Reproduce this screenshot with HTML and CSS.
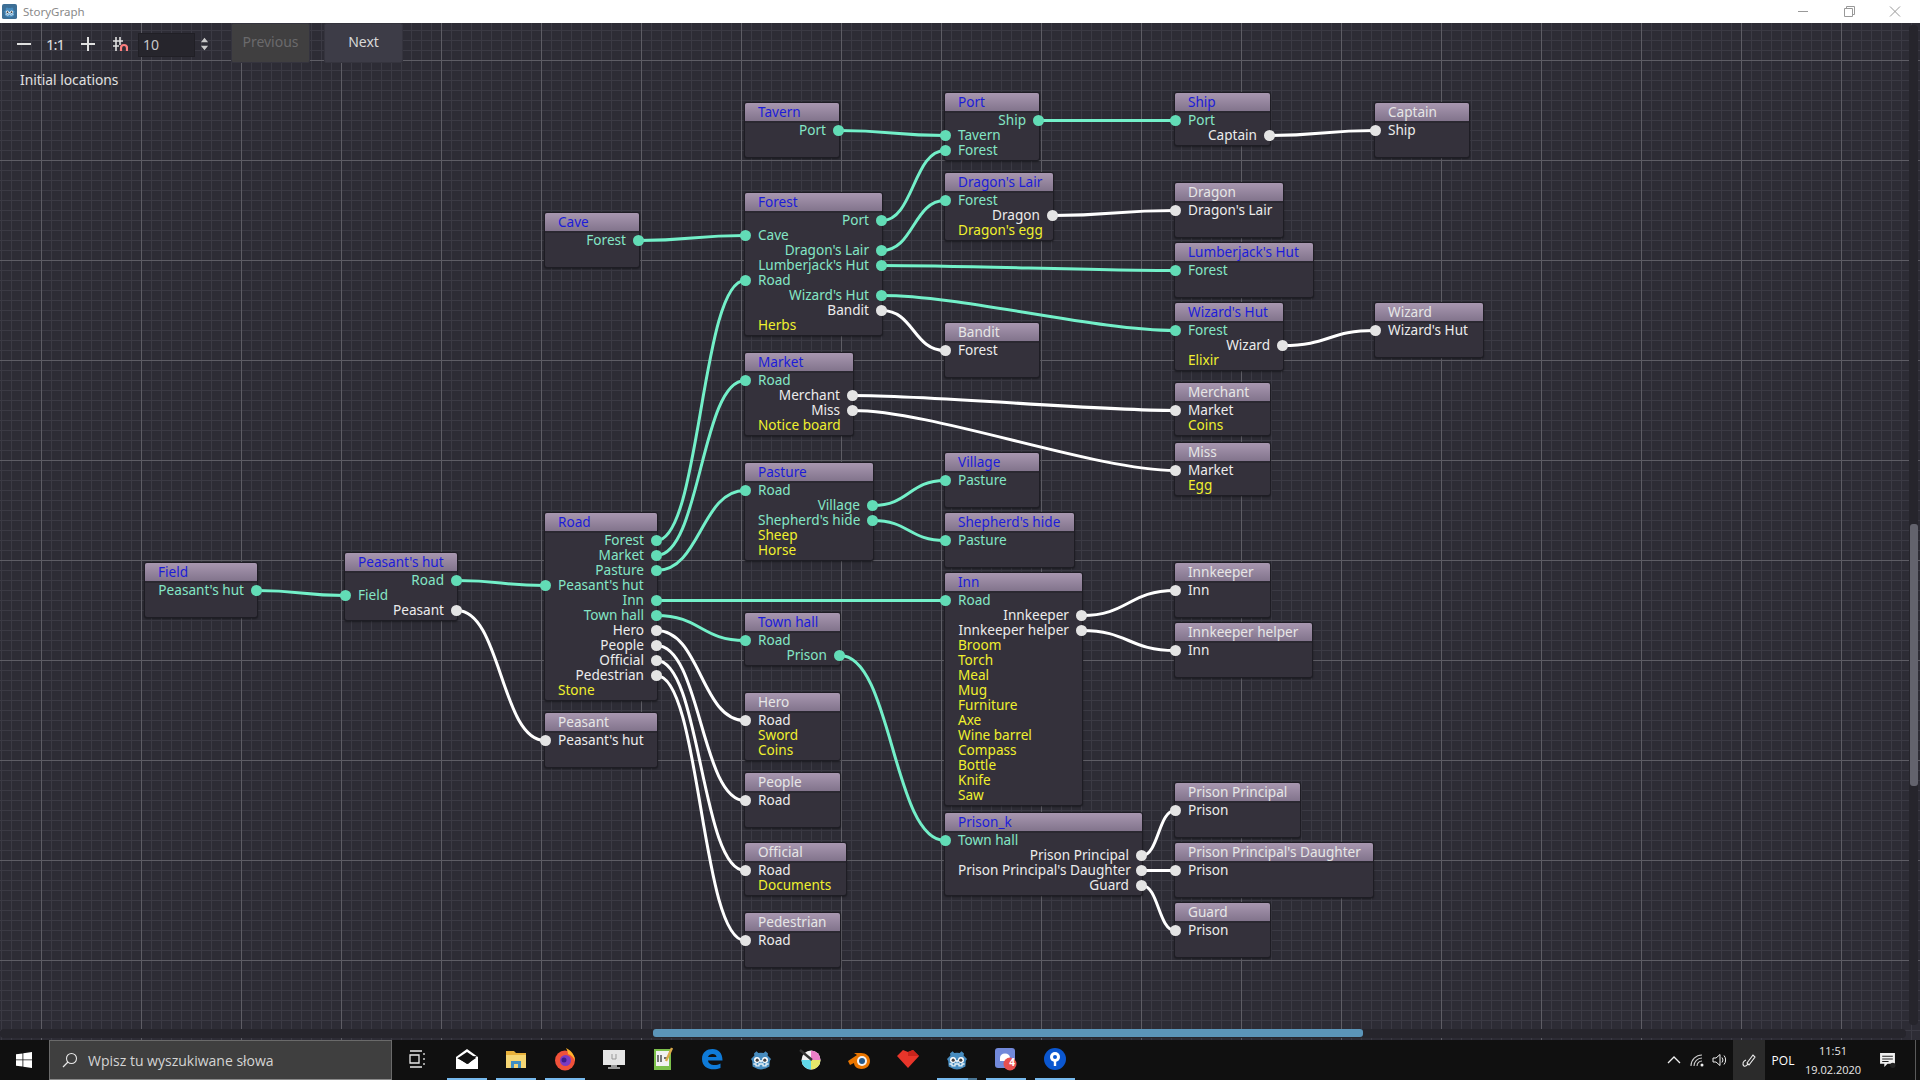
FILE: index.html
```html
<!DOCTYPE html>
<html lang="pl">
<head>
    <meta charset="UTF-8">
    <title>StoryGraph</title>
    <link rel="stylesheet" href="styles.css">
</head>
<body>
    <svg class="defs" width="0" height="0">
        <symbol id="godot" viewBox="0 0 24 24">
            <path fill="#478cbf" d="M5 6.5 L7.5 4.2 L9.3 6 Q12 5.4 14.7 6 L16.5 4.2 L19 6.5 L18.6 8.6 L22 12 L20.8 14 L20.4 19.6 Q16 22.4 12 22.4 Q8 22.4 3.6 19.6 L3.2 14 L2 12 L5.4 8.6 Z"/>
            <circle cx="8" cy="13" r="3" fill="#fff"/>
            <circle cx="16" cy="13" r="3" fill="#fff"/>
            <circle cx="8.2" cy="13.2" r="1.6" fill="#414042"/>
            <circle cx="15.8" cy="13.2" r="1.6" fill="#414042"/>
            <rect x="11.2" y="13" width="1.6" height="2.4" fill="#fff"/>
            <path fill="none" stroke="#e8f2f8" stroke-width="1.3" d="M4.4 17 H7 V18.8 H10 V17 H14 V18.8 H17 V17 H19.6"/>
        </symbol>
    </svg>

    <header class="titlebar">
        <svg class="app-icon" viewBox="0 0 16 16"><rect width="16" height="16" rx="2" fill="#3d6f96"/><use href="#godot" x="1" y="1" width="14" height="14"/></svg>
        <span class="app-name">StoryGraph</span>
        <div class="win-buttons">
            <svg viewBox="0 0 46 23"><path d="M18 11.5 H28" stroke="#999" fill="none"/></svg>
            <svg viewBox="0 0 46 23"><path d="M18.5 8.5 H26.5 V16.5 H18.5 Z M20.5 8.5 V6.5 H28.5 V14.5 H26.5" stroke="#999" fill="none"/></svg>
            <svg viewBox="0 0 46 23"><path d="M18 6.5 L28 16.5 M28 6.5 L18 16.5" stroke="#999" fill="none"/></svg>
        </div>
    </header>

    <main class="graph">
        <!-- wires use window coordinates, so the viewBox starts under the title bar -->
        <svg class="wires" viewBox="0 23 1920 1017">
            <g class="wire-teal">
                <path d="M257 590.5 C301 590.5 301 595.5 345 595.5"/>
                <path d="M457 580.5 C501 580.5 501 585.5 545 585.5"/>
                <path d="M656.5 540.5 C700.5 540.5 701 280.5 745 280.5"/>
                <path d="M656.5 555.5 C700.5 555.5 701 380.5 745 380.5"/>
                <path d="M656.5 570.5 C700.5 570.5 701 490.5 745 490.5"/>
                <path d="M656.5 600.5 H945"/>
                <path d="M656.5 615.5 C700.5 615.5 701 640.5 745 640.5"/>
                <path d="M639 240.5 C692 240.5 692 235.5 745 235.5"/>
                <path d="M839 130.5 C892 130.5 892 135.5 945 135.5"/>
                <path d="M882 220.5 C913.5 220.5 913.5 150.5 945 150.5"/>
                <path d="M882 250.5 C913.5 250.5 913.5 200.5 945 200.5"/>
                <path d="M882 265.5 C962 265.5 1095 270.5 1175 270.5"/>
                <path d="M882 295.5 C962 295.5 1095 330.5 1175 330.5"/>
                <path d="M873 505.5 C909 505.5 909 480.5 945 480.5"/>
                <path d="M873 520.5 C909 520.5 909 540.5 945 540.5"/>
                <path d="M840 655.5 C892 655.5 893 840.5 945 840.5"/>
                <path d="M1039 120.5 H1175"/>
            </g>
            <g class="wire-white">
                <path d="M457 610.5 C501 610.5 501 740.5 545 740.5"/>
                <path d="M656.5 630.5 C700.5 630.5 701 720.5 745 720.5"/>
                <path d="M656.5 645.5 C700.5 645.5 701 800.5 745 800.5"/>
                <path d="M656.5 660.5 C700.5 660.5 701 870.5 745 870.5"/>
                <path d="M656.5 675.5 C700.5 675.5 701 940.5 745 940.5"/>
                <path d="M882 310.5 C913.5 310.5 913.5 350.5 945 350.5"/>
                <path d="M853 395.5 C933 395.5 1095 410.5 1175 410.5"/>
                <path d="M853 410.5 C933 410.5 1095 470.5 1175 470.5"/>
                <path d="M1053 215.5 C1114 215.5 1114 210.5 1175 210.5"/>
                <path d="M1082 615.5 C1128 615.5 1129 590.5 1175 590.5"/>
                <path d="M1082 630.5 C1128 630.5 1129 650.5 1175 650.5"/>
                <path d="M1142 855.5 C1158.5 855.5 1158.5 810.5 1175 810.5"/>
                <path d="M1142 870.5 H1175"/>
                <path d="M1142 885.5 C1158.5 885.5 1158.5 930.5 1175 930.5"/>
                <path d="M1270 135.5 C1322 135.5 1323 130.5 1375 130.5"/>
                <path d="M1283 345.5 C1329 345.5 1329 330.5 1375 330.5"/>
            </g>
        </svg>

        <div class="node n-field">
            <div class="node-title loc">Field</div>
            <div class="row out teal">Peasant's hut<i class="slot"></i></div>
            <div class="row empty"></div>
        </div>
        <div class="node n-peasants-hut">
            <div class="node-title loc">Peasant's hut</div>
            <div class="row out teal">Road<i class="slot"></i></div>
            <div class="row in teal">Field<i class="slot"></i></div>
            <div class="row out white">Peasant<i class="slot"></i></div>
        </div>
        <div class="node n-road">
            <div class="node-title loc">Road</div>
            <div class="row out teal">Forest<i class="slot"></i></div>
            <div class="row out teal">Market<i class="slot"></i></div>
            <div class="row out teal">Pasture<i class="slot"></i></div>
            <div class="row in teal">Peasant's hut<i class="slot"></i></div>
            <div class="row out teal">Inn<i class="slot"></i></div>
            <div class="row out teal">Town hall<i class="slot"></i></div>
            <div class="row out white">Hero<i class="slot"></i></div>
            <div class="row out white">People<i class="slot"></i></div>
            <div class="row out white">Official<i class="slot"></i></div>
            <div class="row out white">Pedestrian<i class="slot"></i></div>
            <div class="row item">Stone</div>
        </div>
        <div class="node n-peasant">
            <div class="node-title">Peasant</div>
            <div class="row in white">Peasant's hut<i class="slot"></i></div>
            <div class="row empty"></div>
        </div>
        <div class="node n-cave">
            <div class="node-title loc">Cave</div>
            <div class="row out teal">Forest<i class="slot"></i></div>
            <div class="row empty"></div>
        </div>
        <div class="node n-tavern">
            <div class="node-title loc">Tavern</div>
            <div class="row out teal">Port<i class="slot"></i></div>
            <div class="row empty"></div>
        </div>
        <div class="node n-forest">
            <div class="node-title loc">Forest</div>
            <div class="row out teal">Port<i class="slot"></i></div>
            <div class="row in teal">Cave<i class="slot"></i></div>
            <div class="row out teal">Dragon's Lair<i class="slot"></i></div>
            <div class="row out teal">Lumberjack's Hut<i class="slot"></i></div>
            <div class="row in teal">Road<i class="slot"></i></div>
            <div class="row out teal">Wizard's Hut<i class="slot"></i></div>
            <div class="row out white">Bandit<i class="slot"></i></div>
            <div class="row item">Herbs</div>
        </div>
        <div class="node n-market">
            <div class="node-title loc">Market</div>
            <div class="row in teal">Road<i class="slot"></i></div>
            <div class="row out white">Merchant<i class="slot"></i></div>
            <div class="row out white">Miss<i class="slot"></i></div>
            <div class="row item">Notice board</div>
        </div>
        <div class="node n-pasture">
            <div class="node-title loc">Pasture</div>
            <div class="row in teal">Road<i class="slot"></i></div>
            <div class="row out teal">Village<i class="slot"></i></div>
            <div class="row out teal">Shepherd's hide<i class="slot"></i></div>
            <div class="row item">Sheep</div>
            <div class="row item">Horse</div>
        </div>
        <div class="node n-town-hall">
            <div class="node-title loc">Town hall</div>
            <div class="row in teal">Road<i class="slot"></i></div>
            <div class="row out teal">Prison<i class="slot"></i></div>
        </div>
        <div class="node n-hero">
            <div class="node-title">Hero</div>
            <div class="row in white">Road<i class="slot"></i></div>
            <div class="row item">Sword</div>
            <div class="row item">Coins</div>
        </div>
        <div class="node n-people">
            <div class="node-title">People</div>
            <div class="row in white">Road<i class="slot"></i></div>
            <div class="row empty"></div>
        </div>
        <div class="node n-official">
            <div class="node-title">Official</div>
            <div class="row in white">Road<i class="slot"></i></div>
            <div class="row item">Documents</div>
        </div>
        <div class="node n-pedestrian">
            <div class="node-title">Pedestrian</div>
            <div class="row in white">Road<i class="slot"></i></div>
            <div class="row empty"></div>
        </div>
        <div class="node n-port">
            <div class="node-title loc">Port</div>
            <div class="row out teal">Ship<i class="slot"></i></div>
            <div class="row in teal">Tavern<i class="slot"></i></div>
            <div class="row in teal">Forest<i class="slot"></i></div>
        </div>
        <div class="node n-dragons-lair">
            <div class="node-title loc">Dragon's Lair</div>
            <div class="row in teal">Forest<i class="slot"></i></div>
            <div class="row out white">Dragon<i class="slot"></i></div>
            <div class="row item">Dragon's egg</div>
        </div>
        <div class="node n-bandit">
            <div class="node-title">Bandit</div>
            <div class="row in white">Forest<i class="slot"></i></div>
            <div class="row empty"></div>
        </div>
        <div class="node n-village">
            <div class="node-title loc">Village</div>
            <div class="row in teal">Pasture<i class="slot"></i></div>
            <div class="row empty"></div>
        </div>
        <div class="node n-shepherds-hide">
            <div class="node-title loc">Shepherd's hide</div>
            <div class="row in teal">Pasture<i class="slot"></i></div>
            <div class="row empty"></div>
        </div>
        <div class="node n-inn">
            <div class="node-title loc">Inn</div>
            <div class="row in teal">Road<i class="slot"></i></div>
            <div class="row out white">Innkeeper<i class="slot"></i></div>
            <div class="row out white">Innkeeper helper<i class="slot"></i></div>
            <div class="row item">Broom</div>
            <div class="row item">Torch</div>
            <div class="row item">Meal</div>
            <div class="row item">Mug</div>
            <div class="row item">Furniture</div>
            <div class="row item">Axe</div>
            <div class="row item">Wine barrel</div>
            <div class="row item">Compass</div>
            <div class="row item">Bottle</div>
            <div class="row item">Knife</div>
            <div class="row item">Saw</div>
        </div>
        <div class="node n-prison">
            <div class="node-title loc">Prison_k</div>
            <div class="row in teal">Town hall<i class="slot"></i></div>
            <div class="row out white">Prison Principal<i class="slot"></i></div>
            <div class="row out white">Prison Principal's Daughter<i class="slot"></i></div>
            <div class="row out white">Guard<i class="slot"></i></div>
        </div>
        <div class="node n-ship">
            <div class="node-title loc">Ship</div>
            <div class="row in teal">Port<i class="slot"></i></div>
            <div class="row out white">Captain<i class="slot"></i></div>
        </div>
        <div class="node n-dragon">
            <div class="node-title">Dragon</div>
            <div class="row in white">Dragon's Lair<i class="slot"></i></div>
            <div class="row empty"></div>
        </div>
        <div class="node n-lumberjacks-hut">
            <div class="node-title loc">Lumberjack's Hut</div>
            <div class="row in teal">Forest<i class="slot"></i></div>
            <div class="row empty"></div>
        </div>
        <div class="node n-wizards-hut">
            <div class="node-title loc">Wizard's Hut</div>
            <div class="row in teal">Forest<i class="slot"></i></div>
            <div class="row out white">Wizard<i class="slot"></i></div>
            <div class="row item">Elixir</div>
        </div>
        <div class="node n-merchant">
            <div class="node-title">Merchant</div>
            <div class="row in white">Market<i class="slot"></i></div>
            <div class="row item">Coins</div>
        </div>
        <div class="node n-miss">
            <div class="node-title">Miss</div>
            <div class="row in white">Market<i class="slot"></i></div>
            <div class="row item">Egg</div>
        </div>
        <div class="node n-innkeeper">
            <div class="node-title">Innkeeper</div>
            <div class="row in white">Inn<i class="slot"></i></div>
            <div class="row empty"></div>
        </div>
        <div class="node n-innkeeper-helper">
            <div class="node-title">Innkeeper helper</div>
            <div class="row in white">Inn<i class="slot"></i></div>
            <div class="row empty"></div>
        </div>
        <div class="node n-principal">
            <div class="node-title">Prison Principal</div>
            <div class="row in white">Prison<i class="slot"></i></div>
            <div class="row empty"></div>
        </div>
        <div class="node n-daughter">
            <div class="node-title">Prison Principal's Daughter</div>
            <div class="row in white">Prison<i class="slot"></i></div>
            <div class="row empty"></div>
        </div>
        <div class="node n-guard">
            <div class="node-title">Guard</div>
            <div class="row in white">Prison<i class="slot"></i></div>
            <div class="row empty"></div>
        </div>
        <div class="node n-captain">
            <div class="node-title">Captain</div>
            <div class="row in white">Ship<i class="slot"></i></div>
            <div class="row empty"></div>
        </div>
        <div class="node n-wizard">
            <div class="node-title">Wizard</div>
            <div class="row in white">Wizard's Hut<i class="slot"></i></div>
            <div class="row empty"></div>
        </div>

        <div class="toolbar">
            <svg class="tool" viewBox="0 0 16 16"><rect x="1" y="7" width="14" height="2" fill="#e0e0e0"/></svg>
            <span class="tool tool-text">1:1</span>
            <svg class="tool" viewBox="0 0 16 16"><path d="M1 7H7V1H9V7H15V9H9V15H7V9H1Z" fill="#e0e0e0"/></svg>
            <svg class="tool" viewBox="0 0 16 16">
                <path d="M4 1V15M8 1V9M1 5H11M1 10H7" stroke="#e0e0e0" stroke-width="1.6" fill="none"/>
                <path d="M9 15V12a3 3 0 0 1 6 0V15" stroke="#fc7f7f" stroke-width="2.2" fill="none"/>
            </svg>
            <div class="spinbox">10</div>
            <svg class="spin-arrows" viewBox="0 0 10 16"><path d="M5 1L9 6H1ZM5 15L1 10H9Z" fill="#c8c8c8"/></svg>
            <button class="btn btn-prev">Previous</button>
            <button class="btn">Next</button>
        </div>
        <div class="stage-label">Initial locations</div>

        <div class="vscroll"><div class="vscroll-grab"></div></div>
        <div class="hscroll"><div class="hscroll-grab"></div></div>
    </main>

    <footer class="taskbar">
        <svg class="start" viewBox="0 0 16 16"><path fill="#fff" d="M0 2.3L6.5 1.4V7.5H0ZM7.3 1.3L16 0V7.5H7.3ZM0 8.3H6.5V14.6L0 13.7ZM7.3 8.3H16V16L7.3 14.7Z"/></svg>
        <div class="search">
            <svg viewBox="0 0 16 16"><circle cx="9.5" cy="6.5" r="5" fill="none" stroke="#e8e8e8" stroke-width="1.1"/><path d="M6 10L1 15" stroke="#e8e8e8" stroke-width="1.2"/></svg>
            <span>Wpisz tu wyszukiwane słowa</span>
        </div>
        <div class="task-items">
            <div class="task task-view">
                <svg viewBox="0 0 24 24"><path d="M6 4H18M6 20H18M6 8H15V16H6ZM20 6V8M20 11V13M20 16V18" fill="none" stroke="#e8e8e8" stroke-width="1.3"/></svg>
            </div>
            <div class="task open">
                <svg viewBox="0 0 24 24"><path fill="#fff" d="M12 2L23 10V22H1V10ZM3 11L12 17L21 11L12 5Z"/><path fill="#111" d="M2 11L22 9L13 17Z"/></svg>
            </div>
            <div class="task open">
                <svg viewBox="0 0 24 24"><path fill="#e8b13b" d="M2 4H10L12 6H22V21H2Z"/><path fill="#f5d674" d="M2 8H22V21H2Z"/><path fill="#3f8fc4" d="M7 21V14H17V21H14V17H10V21Z"/></svg>
            </div>
            <div class="task open">
                <svg viewBox="0 0 24 24"><circle cx="12" cy="13.5" r="10" fill="#f0513a"/><path fill="#ffb32c" d="M13 1C19 4 22 9 22 14C20 9 17 8 15 7C15 5 14 3 13 1Z"/><circle cx="12.5" cy="13.5" r="5.5" fill="#7a3bc2"/><circle cx="11" cy="13" r="2.5" fill="#3c1c8c"/></svg>
            </div>
            <div class="task">
                <svg viewBox="0 0 24 24"><rect x="1" y="3" width="22" height="15" fill="#e6e6e6"/><rect x="9" y="18" width="6" height="2" fill="#999"/><rect x="6" y="20" width="12" height="2" fill="#999"/><path d="M10 7V12H14V7" stroke="#999" fill="none"/></svg>
            </div>
            <div class="task">
                <svg viewBox="0 0 24 24"><rect x="3" y="2" width="17" height="21" fill="#7cc04b"/><rect x="5" y="4" width="13" height="15" fill="#f2f2f2"/><path d="M7 8V15M10 8V15M13 11H16" stroke="#444" stroke-width="1.4"/><path d="M21 1L15 14" stroke="#d9a94a" stroke-width="2.4"/></svg>
            </div>
            <div class="task">
                <svg viewBox="0 0 24 24"><path fill="#0f7bd8" d="M2 12C2 5 7 2 12.5 2C18.500 2 22.500 6 22.500 13.500H8C8.500 18 15 19.500 20.500 16.500V21C13.500 24 2 22.500 2 12ZM8 10H16.500C16.500 6 9 6 8 10Z"/></svg>
            </div>
            <div class="task">
                <svg viewBox="0 0 24 24"><use href="#godot"/></svg>
            </div>
            <div class="task">
                <svg viewBox="0 0 24 24">
                    <circle cx="13" cy="13" r="9.500" fill="#f2f2f2"/>
                    <path d="M13 3.500A9.500 9.500 0 0 1 22.500 13L13 13Z" fill="#ec7fc7"/>
                    <path d="M3.500 13A9.500 9.500 0 0 0 13 22.500L13 13Z" fill="#60d7e8"/>
                    <path d="M13 22.500A9.500 9.500 0 0 0 22.500 13L13 13Z" fill="#e5e86a"/>
                    <path d="M2 3L14 13" stroke="#333" stroke-width="2.400"/>
                </svg>
            </div>
            <div class="task">
                <svg viewBox="0 0 24 24"><path fill="#ea7600" d="M1 14L10 8L7 6H14C19 6 23 9 23 14C23 19 19 22 14.500 22C10 22 7 19 7 16L3 18Z"/><circle cx="15" cy="14" r="5" fill="#f4f4f4"/><circle cx="15" cy="14" r="3" fill="#25598a"/></svg>
            </div>
            <div class="task">
                <svg viewBox="0 0 24 24"><path fill="#e8352a" d="M1 9L7 3L12 5L17 3L23 9L12 21Z"/><path fill="#c9241c" d="M12 5L17 3L23 9H12Z"/></svg>
            </div>
            <div class="task open open-split">
                <svg viewBox="0 0 24 24"><use href="#godot"/></svg>
            </div>
            <div class="task open">
                <svg viewBox="0 0 24 24"><rect x="1" y="1" width="20" height="20" rx="3" fill="#7289da"/><path fill="#fff" d="M6 11C6 8 8 6.500 11 6.500C14 6.500 16 8 16 11V14H6Z"/><circle cx="16" cy="17" r="6.500" fill="#e8504f"/></svg>
                <span class="badge">4</span>
            </div>
            <div class="task open">
                <svg viewBox="0 0 24 24"><circle cx="12" cy="12" r="11" fill="#0b57d0"/><circle cx="12" cy="10" r="5" fill="#fff"/><circle cx="12" cy="10" r="2" fill="#0b57d0"/><rect x="10.800" y="12" width="2.400" height="7" fill="#fff"/></svg>
            </div>
        </div>
        <div class="tray">
            <svg class="tray-icon" viewBox="0 0 16 16"><path d="M2 11L8 5L14 11" fill="none" stroke="#eee" stroke-width="1.300"/></svg>
            <svg class="tray-icon" viewBox="0 0 16 16"><path d="M2 14A11 11 0 0 1 13 3M5 14A8 8 0 0 1 13 6M8 14A5 5 0 0 1 13 9" fill="none" stroke="#ccc" stroke-width="1.100"/><circle cx="13" cy="13" r="1.500" fill="#eee"/></svg>
            <svg class="tray-icon" viewBox="0 0 16 16"><path d="M1 6H4L8 2.500V13.500L4 10H1Z" fill="none" stroke="#eee"/><path d="M10 5.500A4 4 0 0 1 10 10.500M12 3.500A7 7 0 0 1 12 12.500" fill="none" stroke="#eee"/></svg>
            <div class="tray-pen">
                <svg viewBox="0 0 16 16"><path d="M6 11L12 3L14 5L8 13ZM5 8C2 9 1 12 3 14C5 15 6 13 7 12" fill="none" stroke="#eee" stroke-width="1.100"/></svg>
            </div>
            <span class="tray-lang">POL</span>
            <div class="clock"><span>11:51</span><span>19.02.2020</span></div>
            <svg class="tray-note" viewBox="0 0 16 16"><path fill="#f0f0f0" d="M1 1H15V11H8L5 14V11H1Z"/><path d="M3 4H13M3 6.500H13M3 9H9" stroke="#222"/><circle cx="13" cy="12.500" r="2.500" fill="#222"/></svg>
            <div class="show-desktop"></div>
        </div>
    </footer>
</body>
</html>
```

FILE: styles.css
```css
* {
    box-sizing: border-box;
}

body {
    margin: 0;
    width: 1920px;
    height: 1080px;
    overflow: hidden;
    display: flex;
    flex-direction: column;
    font-family: "Noto Sans", sans-serif;
    background-color: #101010;
}

.defs {
    position: absolute;
}

/* window title bar */
.titlebar {
    height: 23px;
    flex: none;
    display: flex;
    align-items: center;
    padding-left: 2px;
    background-color: #ffffff;
}

.app-icon {
    width: 15px;
    height: 15px;
}

.app-name {
    margin-left: 6px;
    font-size: 11.5px;
    color: #8a8a8a;
}

.win-buttons {
    display: flex;
    margin-left: auto;
    padding-right: 2px;
}

.win-buttons svg {
    width: 46px;
    height: 23px;
}

/* graph edit area */
.graph {
    position: relative;
    flex: 1;
    overflow: hidden;
    background-color: #2d2c35;
    background-image:
        linear-gradient(90deg, #5e5d65 1px, transparent 1px),
        linear-gradient(#5e5d65 1px, transparent 1px),
        linear-gradient(90deg, #3b3a44 1px, transparent 1px),
        linear-gradient(#3b3a44 1px, transparent 1px);
    background-size: 100px 100px, 100px 100px, 10px 10px, 10px 10px;
    background-position: 41px 0, 0 37px, 1px 0, 0 7px;
}

.wires {
    position: absolute;
    left: 0;
    top: 0;
    width: 1920px;
    height: 1017px;
}

.wires path {
    fill: none;
    stroke-width: 3;
}

.wire-teal {
    stroke: #73f0c9;
}

.wire-white {
    stroke: #ffffff;
}

/* nodes */
.node {
    position: absolute;
    padding-bottom: 2px;
    background-color: #34313b;
    border-radius: 2px;
    box-shadow: 0 0 0 1px #1e1d24, 0 1px 2px 1px rgba(0, 0, 0, 0.4);
    font-size: 13.6px;
    line-height: 14px;
    white-space: nowrap;
}

.node-title {
    height: 20px;
    padding: 1px 13px 0;
    background: linear-gradient(#a897b0, #82748c);
    border-bottom: 2px solid #2a2830;
    border-radius: 2px 2px 0 0;
    color: #e6e6e6;
    line-height: 15px;
}

.node-title.loc {
    color: #1c1cd8;
}

.row {
    position: relative;
    height: 15px;
    padding: 0 13px;
}

.row.empty {
    height: 17px;
}

.row.out {
    text-align: right;
}

.row.teal {
    color: #84e6c6;
}

.row.white {
    color: #ececec;
}

.row.item {
    color: #f0f02e;
}

.slot {
    position: absolute;
    top: 2px;
    width: 11px;
    height: 11px;
    border-radius: 50%;
}

.row.in .slot {
    left: -5px;
}

.row.out .slot {
    right: -5px;
}

.row.teal .slot {
    background-color: #62dcb6;
}

.row.white .slot {
    background-color: #e4e4e4;
}

.n-field { left: 145px; top: 540px; width: 112px; }
.n-peasants-hut { left: 345px; top: 530px; width: 112px; }
.n-road { left: 545px; top: 490px; width: 112px; }
.n-peasant { left: 545px; top: 690px; width: 112px; }
.n-cave { left: 545px; top: 190px; width: 94px; }
.n-tavern { left: 745px; top: 80px; width: 94px; }
.n-forest { left: 745px; top: 170px; width: 137px; }
.n-market { left: 745px; top: 330px; width: 108px; }
.n-pasture { left: 745px; top: 440px; width: 128px; }
.n-town-hall { left: 745px; top: 590px; width: 95px; }
.n-hero { left: 745px; top: 670px; width: 95px; }
.n-people { left: 745px; top: 750px; width: 95px; }
.n-official { left: 745px; top: 820px; width: 101px; }
.n-pedestrian { left: 745px; top: 890px; width: 95px; }
.n-port { left: 945px; top: 70px; width: 94px; }
.n-dragons-lair { left: 945px; top: 150px; width: 108px; }
.n-bandit { left: 945px; top: 300px; width: 94px; }
.n-village { left: 945px; top: 430px; width: 94px; }
.n-shepherds-hide { left: 945px; top: 490px; width: 129px; }
.n-inn { left: 945px; top: 550px; width: 137px; }
.n-prison { left: 945px; top: 790px; width: 197px; }
.n-ship { left: 1175px; top: 70px; width: 95px; }
.n-dragon { left: 1175px; top: 160px; width: 108px; }
.n-lumberjacks-hut { left: 1175px; top: 220px; width: 138px; }
.n-wizards-hut { left: 1175px; top: 280px; width: 108px; }
.n-merchant { left: 1175px; top: 360px; width: 95px; }
.n-miss { left: 1175px; top: 420px; width: 95px; }
.n-innkeeper { left: 1175px; top: 540px; width: 95px; }
.n-innkeeper-helper { left: 1175px; top: 600px; width: 137px; }
.n-principal { left: 1175px; top: 760px; width: 125px; }
.n-daughter { left: 1175px; top: 820px; width: 198px; }
.n-guard { left: 1175px; top: 880px; width: 95px; }
.n-captain { left: 1375px; top: 80px; width: 94px; }
.n-wizard { left: 1375px; top: 280px; width: 108px; }

/* toolbar over the graph */
.toolbar {
    position: absolute;
    left: 16px;
    top: 0;
    display: flex;
    align-items: flex-start;
}

.tool {
    width: 16px;
    height: 16px;
    margin: 13px 16px 0 0;
}

.tool-text {
    margin-left: -2px;
    margin-right: 18px;
    font-size: 15px;
    line-height: 16px;
    letter-spacing: -1px;
    color: #e0e0e0;
    text-align: center;
}

.spinbox {
    width: 57px;
    height: 24px;
    margin: 10px 0 0 -6px;
    padding-left: 4px;
    background-color: #26252c;
    border: 1px solid #201f25;
    font-size: 14px;
    line-height: 22px;
    color: #c8c8c8;
}

.spin-arrows {
    width: 9px;
    height: 16px;
    margin: 13px 0 0 5px;
}

.btn {
    width: 79px;
    height: 40px;
    margin-left: 14px;
    padding: 0 0 4px;
    background-color: #3d3c47;
    border: 1px solid #35343e;
    border-radius: 2px;
    font-family: "Noto Sans", sans-serif;
    font-size: 14px;
    color: #d8d8d8;
}

.btn-prev {
    margin-left: 22px;
    background-color: #403f40;
    color: #6b6a6c;
}

.stage-label {
    position: absolute;
    left: 20px;
    top: 48px;
    font-size: 13.8px;
    line-height: 18px;
    color: #e0e0e0;
}

/* scroll bars */
.vscroll {
    position: absolute;
    right: 2px;
    top: 2px;
    width: 9px;
    height: 1000px;
    background-color: #26252c;
    border-radius: 4px;
}

.vscroll-grab {
    width: 8px;
    height: 262px;
    margin: 499px 0 0 1px;
    background-color: #63636d;
    border-radius: 3px;
}

.hscroll {
    position: absolute;
    left: 0;
    bottom: 2px;
    width: 1906px;
    height: 9px;
    background-color: #26252c;
    border-radius: 4px;
}

.hscroll-grab {
    width: 710px;
    height: 8px;
    margin-left: 653px;
    background-color: #5b95b9;
    border-radius: 3px;
}

/* windows taskbar */
.taskbar {
    height: 40px;
    flex: none;
    display: flex;
    background-color: #101010;
    color: #ffffff;
}

.start {
    width: 16px;
    height: 16px;
    margin: 12px 17px 0 16px;
}

.search {
    width: 343px;
    display: flex;
    align-items: center;
    gap: 10px;
    padding-left: 12px;
    background-color: #3f3f3f;
    border: 1px solid #6a6a6a;
    border-bottom-color: #8a8a8a;
    font-family: "Open Sans", sans-serif;
    font-size: 14px;
    color: #d4d4d4;
}

.search svg {
    width: 16px;
    height: 16px;
}

.task-items {
    display: flex;
}

.task {
    position: relative;
    width: 49px;
    display: flex;
    align-items: center;
    justify-content: center;
    padding-bottom: 2px;
}

.task-view {
    width: 50px;
    padding-right: 3px;
}

.task svg {
    width: 24px;
    height: 24px;
}

.task.open::after {
    content: "";
    position: absolute;
    left: 5px;
    right: 4px;
    bottom: 0;
    height: 2px;
    background-color: #76b9ed;
}

.task.open-split::after {
    background: linear-gradient(90deg, #76b9ed 78%, #4a7694 78%);
}

.badge {
    position: absolute;
    left: 24px;
    top: 15px;
    width: 14px;
    font-size: 10px;
    line-height: 14px;
    font-weight: 700;
    text-align: center;
}

.tray {
    display: flex;
    align-items: center;
    margin-left: auto;
}

.tray-icon {
    width: 16px;
    height: 16px;
    margin-left: 7px;
}

.tray-pen {
    width: 32px;
    height: 40px;
    display: flex;
    align-items: center;
    justify-content: center;
    margin-left: 5px;
    background-color: #2b2b2b;
}

.tray-pen svg {
    width: 16px;
    height: 16px;
}

.tray-lang {
    width: 36px;
    font-family: "Open Sans", sans-serif;
    font-size: 12px;
    text-align: center;
}

.clock {
    width: 64px;
    display: flex;
    flex-direction: column;
    gap: 3px;
    font-family: "Open Sans", sans-serif;
    font-size: 11px;
    line-height: 16px;
    text-align: center;
    color: #e8e8e8;
}

.tray-note {
    width: 17px;
    height: 17px;
    margin-left: 14px;
}

.show-desktop {
    width: 1px;
    height: 40px;
    margin: 0 4px 0 19px;
    background-color: #5a5a5a;
}
```
